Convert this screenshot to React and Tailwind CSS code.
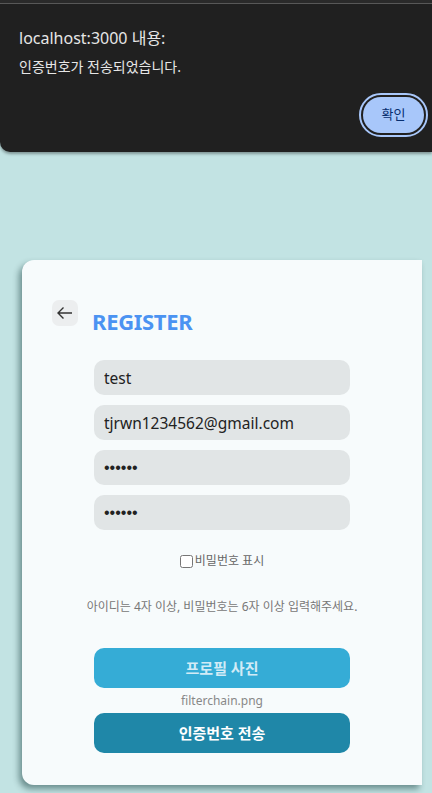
import { useState } from 'react';

const font = { fontFamily: '"Noto Sans", "Noto Sans CJK KR", sans-serif' };

export default function App() {
  const [showPw, setShowPw] = useState(false);

  return (
    <div className="min-h-[793px] w-[432px] overflow-hidden bg-[#c2e3e3]" style={font}>
      <div className="h-[3px] bg-[#2a2a2a]" />
      <div className="h-[1px] bg-[#5a5a5a]" />
      <div className="h-[148px] rounded-bl-[10px] bg-[#202020] pl-[19px] pr-[4px] pt-[22px] shadow-[0_2px_3px_rgba(0,0,0,0.35)]">
        <div className="text-[16px] leading-[24px] text-[#e6e6e6]">localhost:3000 내용:</div>
        <div className="mt-[7px] text-[14px] leading-[19px] text-[#e6e6e6]">인증번호가 전송되었습니다.</div>
        <div className="mt-[17px] flex justify-end">
          <button className="flex h-[44px] w-[69px] items-center justify-center rounded-full border-[2px] border-[#a8c7fa] bg-[#202020] p-[2px]">
            <span className="flex h-full w-full items-center justify-center rounded-full bg-[#a8c7fa] text-[13px] text-[#062e6f]">확인</span>
          </button>
        </div>
      </div>

      <div className="ml-[22px] mt-[108px] h-[525px] w-[400px] rounded-l-[12px] bg-[#f7fbfc] shadow-[-3px_4px_6px_rgba(0,40,40,0.45)]">
        <div className="flex items-start pl-[30px] pt-[40px]">
          <button className="flex h-[26px] w-[26px] items-center justify-center rounded-[7px] bg-[#eceeef]">
            <svg width="18" height="14" viewBox="0 0 18 14" fill="none" stroke="#333" strokeWidth="1.4">
              <path d="M16 7H2M7.5 1.5L2 7l5.5 5.5" />
            </svg>
          </button>
          <h1 className="ml-[14px] mt-[8px] text-[22px] font-bold leading-[26px] tracking-[-0.3px] text-[#4b93f2]">REGISTER</h1>
        </div>

        <div className="mx-auto mt-[26px] flex w-[256px] flex-col gap-[10px]">
          <input className="h-[35px] w-full rounded-[10px] bg-[#e1e5e6] px-[10px] text-[15.5px] text-[#222] outline-none" defaultValue="test" style={font} />
          <input className="h-[35px] w-full rounded-[10px] bg-[#e1e5e6] px-[10px] text-[15.5px] text-[#222] outline-none" defaultValue="tjrwn1234562@gmail.com" style={font} />
          <input type={showPw ? 'text' : 'password'} className="h-[35px] w-full rounded-[10px] bg-[#e1e5e6] px-[10px] text-[16px] text-[#222] outline-none" defaultValue="123456" style={{ fontFamily: '"Liberation Sans", sans-serif' }} />
          <input type={showPw ? 'text' : 'password'} className="h-[35px] w-full rounded-[10px] bg-[#e1e5e6] px-[10px] text-[16px] text-[#222] outline-none" defaultValue="123456" style={{ fontFamily: '"Liberation Sans", sans-serif' }} />
        </div>

        <label className="mt-[23px] flex items-center justify-center gap-[2px] text-[12px] leading-[16px] text-[#666]">
          <input type="checkbox" checked={showPw} onChange={(e) => setShowPw(e.target.checked)} className="h-[13px] w-[13px]" />
          비밀번호 표시
        </label>

        <p className="mt-[30px] text-center text-[12px] leading-[16px] text-[#777]">
          아이디는 4자 이상, 비밀번호는 6자 이상 입력해주세요.
        </p>

        <div className="mx-auto mt-[33px] flex w-[256px] flex-col items-center">
          <button className="h-[40px] w-full rounded-[10px] bg-[#35acd6] text-[15px] font-bold text-[#d2ebf6]">프로필 사진</button>
          <span className="mt-[5px] text-[12px] leading-[16px] text-[#888]">filterchain.png</span>
          <button className="mt-[4px] h-[40px] w-full rounded-[10px] bg-[#1f87a8] text-[15px] font-bold text-white">인증번호 전송</button>
        </div>
      </div>
    </div>
  );
}
